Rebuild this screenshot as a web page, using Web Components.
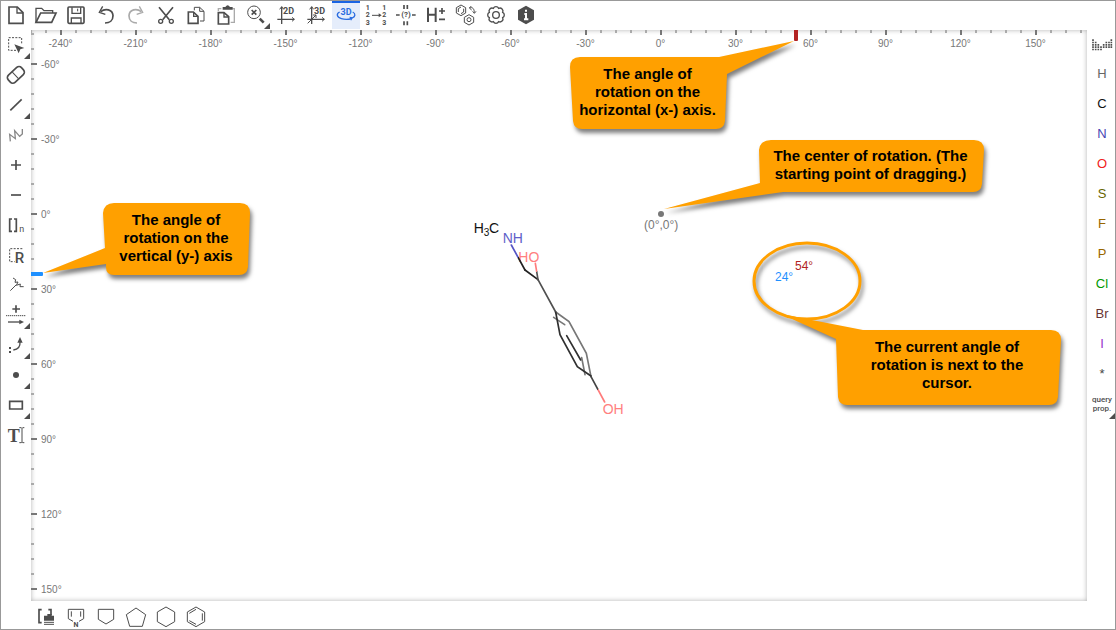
<!DOCTYPE html>
<html lang="en">
<head>
<meta charset="utf-8">
<title>Molecule editor – 3D rotation</title>
<style>
html,body{height:100%;margin:0}
body{font-family:"Liberation Sans",Arial,sans-serif;background:#fff}
</style>
</head>
<body>
<molecule-editor></molecule-editor>
<script>
const define = (name, html) => customElements.define(name, class extends HTMLElement {
  constructor() {
    super();
    this.attachShadow({mode: 'open'});
  }
  connectedCallback() {
    const t = document.createElement('template');
    t.innerHTML = typeof html === 'function' ? html(this) : html;
    this.shadowRoot.replaceChildren(t.content.cloneNode(true));
  }
});

/* Each icon: viewBox origin x, origin y, markup. Three units are one pixel. */
const icons = {
  new: [6, 3, '<path class="b" d="M27 21H52L69 38V70H27Z"/><path class="m" d="M51 21V39H69"/>'],
  open: [96, 3, '<path class="m" d="M108 67V25H125L132 32H158V39"/><path class="b" d="M108 67L122 39H168L155 67Z"/>'],
  save: [186, 3, '<path class="b" d="M207 21H249Q252 21 252 24V67Q252 70 249 70H207Q204 70 204 67V24Q204 21 207 21Z"/><path class="m" d="M216 22V40H242V22M214 70V54H243V70"/><path class="t" d="M233 26V34"/>'],
  undo: [276, 3, '<path class="b" d="M302 35C316 24 338 28 339 47C339 61 329 69 315 69"/><path class="m" d="M308 19L298 37L316 43"/>'],
  redo: [366, 3, '<g class="dim"><path class="b" d="M424 35C410 24 388 28 387 47C387 61 397 69 411 69"/><path class="m" d="M418 19L428 37L410 43"/></g>'],
  cut: [456, 3, '<path class="b" d="M477 22L508 59M519 22L488 59"/><circle class="m" cx="482" cy="64" r="6"/><circle class="m" cx="514" cy="64" r="6"/>'],
  copy: [546, 3, '<path class="b" d="M565 36H580L594 49V70H565Z"/><path class="m" d="M581 36V49H593"/><path class="t" d="M583 31V22H599L612 34V63H600M599 22V34H612"/>'],
  paste: [636, 3, '<path class="b" d="M655 38H672L686 50V72H655Z"/><path class="m" d="M672 38V51H685"/><path class="m dim" d="M655 33V26H664M697 26H703V67H692"/><path class="f" d="M668 29H698V21H690Q683 11 676 21H668Z"/>'],
  zoom: [726, 3, '<circle class="t" cx="762" cy="37" r="19"/><path class="b" d="M755 30L769 44M769 30L755 44"/><path stroke-width="8" d="M779 56L791 68"/>'],
  clean2d: [6, 3, '<path class="m" d="M35 20V72M22 58H73"/><path class="t" d="M29 28L35 20L41 28M66 52L73 58L66 64"/><text x="39" y="41" font-size="27" font-weight="700">2D</text>'],
  clean3d: [96, 3, '<path class="m" d="M125 20V72M112 58H163"/><path class="t" d="M119 28L125 20L131 28M156 52L163 58L156 64M113 70L138 45M129 45H138V54"/><text x="132" y="41" font-size="27" font-weight="700">3D</text>'],
  rotate3d: [186, 3, '<g class="blue"><path class="m" d="M209 36C198 41 200 52 214 56C224 59 236 59 245 55M248 36C258 41 256 50 247 54"/><path class="f" d="M238 50L250 52L243 62Z"/><text x="228" y="46" font-size="27" font-weight="700" text-anchor="middle">3D</text></g>'],
  map: [276, 3, '<g font-size="21" font-weight="700"><text x="287" y="29">1</text><text x="287" y="52">2</text><text x="287" y="75">3</text><text x="337" y="29">1</text><text x="337" y="52">2</text><text x="337" y="75">3</text></g><path class="t" d="M306 46H328"/><path class="f" d="M326 40L335 46L326 52Z"/>'],
  check: [366, 3, '<path class="m" d="M378 45H389M426 45H437"/><path class="b" d="M402 15V27M412 15V27M402 64V76M412 64V76"/><text x="408" y="52" font-size="24" font-weight="700" text-anchor="middle">(?)</text>'],
  hydro: [456, 3, '<path stroke-width="6" d="M474 23V66M497 23V66M474 44H497"/><path class="b" d="M507 33H525M516 24V42M507 58H525"/>'],
  library: [546, 3, '<path class="t" d="M573 15L587 23V39L573 47L559 39V23ZM573 21L565 26V36M581 26V36L573 41M597 44L611 52V67L597 75L583 67V52Z"/><circle class="t" cx="597" cy="59" r="6"/><path class="t" d="M599 24C608 20 613 27 613 38M604 18L598 24L605 30M608 34L613 40L618 34"/>'],
  settings: [636, 3, '<path class="m" d="M698 53A9 9 0 0 1 686 65A9 9 0 0 1 670 65A9 9 0 0 1 658 53A9 9 0 0 1 658 37A9 9 0 0 1 670 25A9 9 0 0 1 686 25A9 9 0 0 1 698 37A9 9 0 0 1 698 53Z"/><circle class="m" cx="678" cy="45" r="10"/>'],
  info: [726, 3, '<path class="f" d="M768 17L792 31V59L768 73L744 59V31Z"/><path stroke="#fff" stroke-width="6" d="M768 29V35M763 42H768V58M762 58H775"/>'],
  select: [6, 3, '<path class="t" stroke-dasharray="6 4" d="M48 61H26V23H65V44"/><path class="f" d="M43 43L73 54L61 58L56 70Z"/>'],
  erase: [6, 93, '<g transform="rotate(-43 48 135)"><rect class="b" x="21" y="120" width="54" height="29" rx="10"/><path class="t" d="M46 121V148"/></g>'],
  bond: [6, 183, '<path class="b" d="M31 241L65 208"/>'],
  chain: [6, 273, '<path class="m" stroke="#888" d="M31 334L29 313L46 326L44 302L59 319L67 312V297"/>'],
  plus: [6, 363, '<path class="b" d="M33 405H63M48 390V420"/>'],
  minus: [6, 453, '<path class="b" d="M33 495H63"/>'],
  bracket: [6, 543, '<path class="b" d="M36 567H29V604H36M42 567H49V604H42"/><text x="58" y="606" font-size="27">n</text>'],
  rgroup: [6, 3, '<path class="t" stroke-dasharray="6 4" d="M67 26H29V65H44"/><text x="44" y="68" font-size="45" font-weight="500">R</text>'],
  attach: [6, 93, '<path class="t" d="M31 152L48 135M39 114L47 119L45 127L54 126L49 136L61 132L60 140L71 140"/>'],
  reaction: [6, 183, '<path class="b" d="M37 207H60M48 196V218"/><path class="t" stroke-dasharray="4 2" d="M18 227H78"/><path class="m" d="M24 246H62"/><path class="f" d="M58 239L72 246L58 253Z"/>'],
  flow: [6, 273, '<path class="f" d="M27 321H33V327H27ZM27 333H33V339H27ZM60 291L68 308H52Z"/><path class="m" d="M40 330C54 328 61 318 60 306"/>'],
  radical: [6, 363, '<circle class="f" cx="48" cy="405" r="9"/>'],
  rect: [6, 453, '<path class="b" d="M29 484H67V507H29Z"/>'],
  text: [6, 543, '<text class="serif" x="23" y="606" font-size="54" font-weight="700">T</text><path class="t" d="M58 563H64L66 565L68 563H73M66 565V606M58 608H64L66 606L68 608H73"/>'],
  template: [96, 63, '<path class="b" d="M125 89H117V128H125M145 89H153V106"/><path class="f" d="M132 107H142V102H155V107H162V122H132Z"/><path class="t" d="M132 127H162M132 133H162"/>'],
  pyrrole: [186, 63, '<path class="t" d="M219 124L205 116V88H251V116L237 124M214 94V110M242 94V110"/><text x="228" y="140" text-anchor="middle" font-size="21" font-weight="700">N</text>'],
  cyclop: [276, 63, '<path class="t" d="M295 88H341V118L318 132L295 118Z"/>'],
  penta: [366, 63, '<path class="t" d="M408 84L437 104L427 139H389L379 104Z"/>'],
  hexa: [456, 63, '<path class="t" d="M498 81L524 96V125L498 140L472 125V96Z"/>'],
  benzene: [546, 63, '<path class="t" d="M588 81L614 96V125L588 140L562 125V96ZM588 88L568 100M607 100V122M568 122L588 133"/>'],
  ptable: [141, 93, '<path stroke-width="5" stroke-dasharray="5 2" d="M159 118V152M167 125V152M175 132V152M183 139V152M191 132V146M199 125V146M207 125V146M214 118V146"/>']
};

define('tool-button', el => {
  const i = icons[el.getAttribute('icon')], label = el.getAttribute('label') || '';
  const on = el.hasAttribute('active');
  return `<style>
    :host{display:block;flex:none}
    button{display:grid;place-items:center;position:relative;box-sizing:border-box;width:28px;height:28px;margin:0;padding:0;border:0;background:none;color:inherit;font:inherit;line-height:inherit}
    button.on{background:linear-gradient(#1a64e3 0 2px,#e5edfb 2px)}
    button.word{padding:0 0 2px 2px}
    button>svg{display:block;width:28px;height:28px;fill:none;stroke:#4d4d4d}
    .t{stroke-width:3}.m{stroke-width:4}.b{stroke-width:5}
    .f{fill:#4d4d4d;stroke:none}
    text{fill:#4d4d4d;stroke:none;font-family:Roboto,sans-serif}
    text.serif{font-family:"Liberation Serif",serif}
    .dim{stroke:#aaa}.dim .f{fill:#aaa}
    .blue{stroke:#2b6de0}.blue .f,.blue text{fill:#2b6de0}
    .more{position:absolute;right:0;bottom:0;border:0 solid transparent;border-width:0 0 6px 6px;border-bottom-color:#4d4d4d}
  </style><button type="button" class="${on ? 'on' : i ? '' : 'word'}" aria-label="${label}" ${on ? 'aria-pressed="true"' : ''}>
  ${i ? `<svg viewBox="${i[0]} ${i[1]} 84 84" aria-hidden="true">${i[2]}</svg>` : '<span><slot></slot></span>'}
  ${el.hasAttribute('more') ? '<span class="more"></span>' : ''}</button>`;
});

define('tool-bar', `<style>
  :host{display:flex;gap:2px;box-sizing:border-box}
  :host([vertical]){flex-direction:column}
</style><slot></slot>`);

define('angle-ruler', el => {
  const v = el.hasAttribute('vertical'), a = [];
  for (let n = +el.getAttribute('from'); n <= +el.getAttribute('to'); n += 30) a.push(`<span>${n}°</span>`);
  return `<style>
    :host{display:flex;overflow:hidden;font-size:10px;line-height:12px;color:#777;pointer-events:none;background-repeat:no-repeat}
    span{flex:none;display:block}
    ${v ? `:host{flex-direction:column;align-items:flex-start;
      background-image:repeating-linear-gradient(transparent 0 33px,#777 33px 35px,transparent 35px 75px),repeating-linear-gradient(transparent 0 3px,#aaa 3px 5px,transparent 5px 15px);background-size:6px 100%,3px 100%}
      span{height:75px;line-height:75px;padding-left:10px}
      span:first-of-type{margin-top:-3px}`
    : `:host{background-image:repeating-linear-gradient(90deg,transparent 0 29px,#777 29px 31px,transparent 31px 75px),repeating-linear-gradient(90deg,#aaa 0 1px,transparent 1px 14px,#aaa 14px 15px);background-size:100% 5px,100% 3px}
      span{width:75px;text-align:center;padding-top:8px}
      span:first-of-type{margin-left:-8px}`}
  </style>${a.join('')}`;
});

define('call-out', el => `<style>
  :host{position:absolute;display:grid;place-items:center;text-align:center;font-weight:700;font-size:15px;line-height:18px;color:#000;white-space:nowrap}
  svg{position:absolute;inset:0;width:100%;height:100%;overflow:visible;filter:drop-shadow(2px 4px 2px rgba(0,0,0,.5))}
  path{fill:#ffa000}
  ellipse{fill:none;stroke:#ffa000;stroke-width:3}
  div{position:relative;padding-bottom:2px}
</style><svg aria-hidden="true">${el.hasAttribute('ring') ? '<ellipse cx="-29" cy="-49" rx="53" ry="38"/>' : ''}<path d="${el.getAttribute('shape')}"/></svg><div><slot></slot></div>`);

define('molecule-view', `<style>
  :host{display:block;width:220px;height:230px}
  svg{display:block;width:100%;height:100%;fill:none;stroke-width:5;stroke-linecap:round}
  text{stroke:none;font-family:"Liberation Sans",Arial,sans-serif;font-size:42px}
</style>
<svg viewBox="0 0 660 690" role="img" aria-label="Structure of synephrine">
  <defs>
    <linearGradient id="n" gradientUnits="userSpaceOnUse" x1="214" y1="135" x2="255" y2="210"><stop offset=".5" stop-color="#5454c4"/><stop offset=".5" stop-color="#222"/></linearGradient>
    <linearGradient id="a" gradientUnits="userSpaceOnUse" x1="286" y1="190" x2="294" y2="239"><stop offset=".5" stop-color="#ff7b7b"/><stop offset=".5" stop-color="#555"/></linearGradient>
    <linearGradient id="b" gradientUnits="userSpaceOnUse" x1="453" y1="530" x2="494" y2="606"><stop offset=".5" stop-color="#444"/><stop offset=".5" stop-color="#ff7b7b"/></linearGradient>
  </defs>
  <text x="101" y="99" fill="#111">H</text><text x="131" y="108" fill="#111" style="font-size:30px">3</text><text x="147" y="99" fill="#111">C</text>
  <text x="188" y="129" fill="#6060c8">NH</text>
  <text x="235" y="186" fill="#ff8080">HO</text>
  <text x="488" y="642" fill="#ff8080">OH</text>
  <path stroke="url(#n)" d="M214 135L255 210"/>
  <path stroke="#222" d="M255 210L294 239"/>
  <path stroke="url(#a)" d="M286 190L294 239"/>
  <path stroke="#505050" d="M294 239L347 336"/>
  <path stroke="#777" d="M347 336L387 365L439 460L453 530M341 352L374 374M425 473L435 524"/>
  <path stroke="#303030" d="M347 336L360 404L412 500L453 528M380 407L422 480"/>
  <path stroke="url(#b)" d="M453 530L494 606"/>
</svg>`);

define('drawing-canvas', `<style>
  :host{display:grid;position:relative;overflow:hidden;background:#fff;min-width:0;min-height:0}
  :host::before{content:"";grid-area:1/1;box-shadow:inset 0 0 5px rgba(0,0,0,.3)}
  angle-ruler{grid-area:1/1}
  .x{height:24px}
  .y{width:48px}
  .mark,.origin,molecule-view,output{position:absolute}
  .mark.h{left:763px;top:0;width:4px;height:11px;background:#b22222;border-radius:0 0 1px 1px}
  .mark.v{left:0;top:242px;width:12px;height:4px;background:#1e90ff;border-radius:0 1px 1px 0}
  molecule-view{left:409px;top:170px}
  .origin{left:627px;top:181px;width:6px;height:6px;border-radius:50%;background:#777}
  output{font-size:12px;line-height:14px}
  .c{left:613px;top:188px;color:#777}
  .a{left:764px;top:229px;color:#b22222}
  .b{left:744px;top:240px;color:#1e90ff}
</style>
<angle-ruler class="x" from="-240" to="150"></angle-ruler>
<angle-ruler class="y" vertical from="-60" to="150"></angle-ruler>
<molecule-view></molecule-view>
<span class="mark h"></span><span class="mark v"></span>
<span class="origin"></span>
<output class="c">(0°,0°)</output>
<call-out style="left:539px;top:27px;width:155px;height:72px" shape="M10 0H149L224 -16L157 17L155 64Q154 72 146 72H12Q4 72 3 64L0 10Q0 0 10 0Z">The angle of<br>rotation on the<br>horizontal (x-) axis.</call-out>
<call-out style="left:728px;top:110px;width:223px;height:52px" shape="M12 0H215Q225 0 225 10L223 44Q222 52 214 52H24L-95 69L1 43L0 10Q1 0 12 0Z">The center of rotation. (The<br>starting point of dragging.)</call-out>
<call-out style="left:72px;top:173px;width:146px;height:72px" shape="M11 0H137Q147 0 147 10L145 64Q144 72 136 72H11Q3 72 3 64V61L-60 70L2 45L0 10Q1 0 11 0Z">The angle of<br>rotation on the<br>vertical (y-) axis</call-out>
<call-out ring style="left:805px;top:300px;width:222px;height:72px" shape="M27 0H215Q225 0 225 10L222 67Q221 75 213 75H11Q3 75 2 67L0 9L-55 -16Z">The current angle of<br>rotation is next to the<br>cursor.</call-out>
<output class="a">54°</output><output class="b">24°</output>`);

const tools = list => list.map(([i, l, x = '']) => `<tool-button icon="${i}" label="${l}" ${x}></tool-button>`).join('');
const atoms = [['H','#666'],['C','#111'],['N','#4646b4'],['O','#f02020'],['S','#666600'],['F','#996600'],['P','#996600'],['Cl','#009900'],['Br','#663333'],['I','#9933cc'],['*','#444']];

define('molecule-editor', `<style>
  :host{display:grid;box-sizing:border-box;height:100vh;border:1px solid #999;grid-template:29px minmax(0,1fr) 28px/30px minmax(0,1fr) 28px;background:#fff}
  .top{grid-area:1/1/2/4;padding-left:1px}
  .left{grid-area:2/1;padding:1px 0 0 1px}
  .right{grid-area:2/3;padding-top:1px;font-size:13px;line-height:16px}
  .bottom{grid-area:3/1/4/4;padding-left:31px}
  drawing-canvas{grid-area:2/2}
  .query{font:500 8px/9px Roboto,sans-serif;color:#4d4d4d}
</style>
<tool-bar class="top" role="toolbar">${tools([['new','New'],['open','Open'],['save','Save'],['undo','Undo'],['redo','Redo'],['cut','Cut'],['copy','Copy'],['paste','Paste'],['zoom','Zoom','more'],['clean2d','Clean 2D'],['clean3d','Clean 3D'],['rotate3d','Rotate in 3D','active'],['map','Atom mapping'],['check','Check structure'],['hydro','Add or remove hydrogens'],['library','Templates'],['settings','Settings'],['info','About']])}</tool-bar>
<tool-bar class="left" vertical role="toolbar">${tools([['select','Selection','more'],['erase','Erase'],['bond','Single bond','more'],['chain','Chain'],['plus','Increase charge'],['minus','Decrease charge'],['bracket','Repeating unit'],['rgroup','R-group'],['attach','Attachment point'],['reaction','Reaction','more'],['flow','Electron flow','more'],['radical','Radical','more'],['rect','Rectangle','more'],['text','Text']])}</tool-bar>
<drawing-canvas></drawing-canvas>
<tool-bar class="right" vertical role="toolbar">${tools([['ptable','Periodic table']])}${atoms.map(([s, c]) => `<tool-button label="${s}" style="color:${c}">${s}</tool-button>`).join('')}<tool-button class="query" label="Query properties" more>query<br>prop.</tool-button></tool-bar>
<tool-bar class="bottom" role="toolbar">${tools([['template','Template library'],['pyrrole','Pyrrole'],['cyclop','Cyclopentane'],['penta','Pentagon'],['hexa','Cyclohexane'],['benzene','Benzene']])}</tool-bar>`);
</script>
</body>
</html>
